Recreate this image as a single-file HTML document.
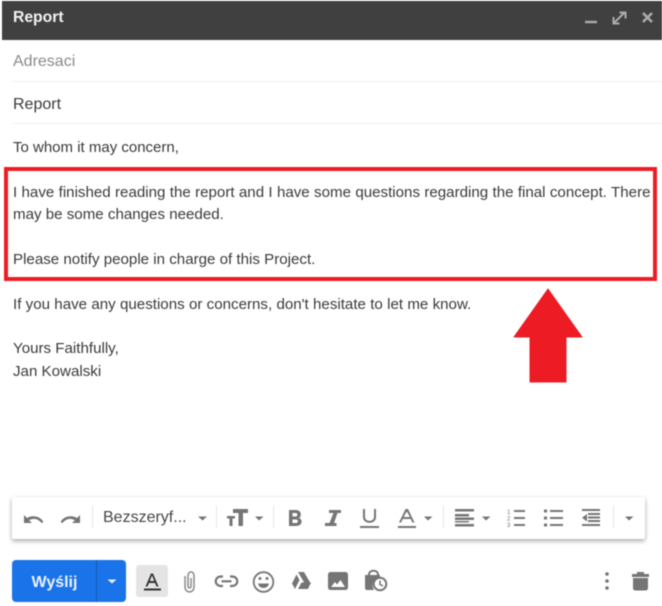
<!DOCTYPE html>
<html><head><meta charset="utf-8">
<style>
html,body{margin:0;padding:0;background:#fff}
body{width:662px;height:606px;position:relative;overflow:hidden;font-family:"Liberation Sans",sans-serif;color:#333}
#w{position:absolute;left:0;top:0;width:662px;height:606px;filter:blur(.45px)}
.t{position:absolute;white-space:nowrap;line-height:20px;font-size:15.12px;color:#3a3a3a;left:13px}
.line{position:absolute;left:13px;right:0;height:1px;background:#ececec}
svg.i{position:absolute;overflow:visible}
</style></head><body><div id="w">
<div style="position:absolute;left:2px;top:1px;width:660px;height:39px;background:#404040"></div>
<div class="t" style="top:8px;font-weight:bold;color:#f2f2f2;font-size:15.7px">Report</div>
<svg class="i" style="left:580px;top:8px" width="80" height="20" fill="none" stroke="#ababab" stroke-width="2.4">
<path d="M5 14H17"/>
<path d="M34 15L44 5M39.500 4.500H45.500V10.500M33.500 9V15.500H39.500" stroke-width="2"/>
<path d="M63 5L72 14M72 5L63 14" stroke-width="2.6"/>
</svg>
<div class="t" style="top:52px;color:#8a8a8a;font-size:16px">Adresaci</div>
<div class="line" style="top:81px"></div>
<div class="t" style="top:95px;font-size:16px">Report</div>
<div class="line" style="top:123px"></div>

<div class="t" style="top:138px;font-size:15px">To whom it may concern,</div>
<div class="t" style="top:183px;word-spacing:.13px">I have finished reading the report and I have some questions regarding the final concept. There</div>
<div class="t" style="top:205px">may be some changes needed.</div>
<div class="t" style="top:250px">Please notify people in charge of this Project.</div>
<div class="t" style="top:295px;word-spacing:.08px">If you have any questions or concerns, don't hesitate to let me know.</div>
<div class="t" style="top:339px">Yours Faithfully,</div>
<div class="t" style="top:362px">Jan Kowalski</div>

<div style="position:absolute;left:4px;top:167px;width:645px;height:106px;border:4px solid #ed1c24"></div>
<svg class="i" style="left:0;top:0" width="662" height="606"><path d="M548 289L582 337H566V382H530V337H514Z" fill="#ed1c24" stroke="#ed1c24" stroke-width="1" stroke-linejoin="round"/></svg>

<div style="position:absolute;left:12px;top:497px;width:633px;height:42px;background:#fff;border-radius:2px;box-shadow:0 2px 5px rgba(0,0,0,.35)"></div>
<div class="t" style="left:103px;top:508px;font-size:16px;color:#464646">Bezszeryf...</div>

<svg class="i" style="left:0;top:490px" width="662" height="116">
<g fill="#757575">
<path d="M24 25L24 33L32 33L29 30.300C33 27.800 38 28.300 41.500 33L43.500 32C40 25.800 32 25 27 28Z"/>
<path d="M80 25L80 33L72 33L75 30.300C71 27.800 66 28.300 62.500 33L60.500 32C64 25.800 72 25 77 28Z"/>
<path d="M198 26.500H207L202.500 30.500ZM255 26.500H263.500L259 30.500ZM424 26.500H432.500L428 30.500ZM482 26.500H490.500L486 30.500ZM625 26.500H633.500L629 30.500Z"/>
<path d="M233 19H248V23H243V36H238.500V23H233ZM227 26H235V28.500H232.500V36H229.500V28.500H227Z"/>
<path d="M289 20H296C302 20 302 27.500 298.500 28C303 28.500 303 36 296 36H289ZM292.500 23V26.500H295.500C298 26.500 298 23 295.500 23ZM292.500 29.500V33H296C298.500 33 298.500 29.500 296 29.500Z"/>
<path d="M329 20H341V23H337.500L334 33H336.500V36H325V33H329.500L333.500 23H329Z"/>
<rect x="360" y="36" width="19" height="2"/>
<rect x="398" y="36" width="18" height="2"/>
<path d="M405.500 19H408L414.500 32.500H412.300L410.800 29H402.700L401.200 32.500H399ZM403.600 27H410L406.800 21.500Z"/>
<path d="M455 19H474V21.500H455ZM455 24H469V26.500H455ZM455 27.500H474V30H455ZM455 31H469V32.500H455ZM455 34H474V36.500H455Z"/>
<path d="M514 20H525V22H514ZM514 27H525V29H514ZM514 34H525V36H514Z"/>
<path d="M544 19.500h3v3h-3zM544 26.500h3v3h-3zM544 33.500h3v3h-3zM550 20H563V22H550ZM550 27H563V29H550ZM550 34H563V36H550Z"/>
<path d="M582 19H600V21H582ZM588 23H600V25H588ZM588 26.500H600V28.500H588ZM588 30H600V32H588ZM582 34H600V36H582ZM587 24V31.500L582 27.800Z"/>
</g>
<g fill="none" stroke="#757575" stroke-width="2"><path d="M364 19V27C364 33.500 375 33.500 375 27V19"/></g>
<g fill="#757575" font-family="Liberation Sans" font-size="6"><text x="507" y="24">1</text><text x="507" y="30.500">2</text><text x="507" y="37">3</text></g>
<g fill="#e6e6e6"><rect x="92" y="16" width="1" height="22"/><rect x="216" y="16" width="1" height="22"/><rect x="273" y="16" width="1" height="22"/><rect x="443" y="16" width="1" height="22"/><rect x="613" y="16" width="1" height="22"/></g>

<rect x="12" y="70" width="114" height="42" rx="4" fill="#1a73e8"/>
<rect x="96" y="70" width="1" height="42" fill="#1358b4"/>
<text x="31.500" y="97" font-family="Liberation Sans" font-weight="bold" font-size="16" fill="#eaf2fd">Wyślij</text>
<path d="M107.500 89.500H116.500L112 93.500Z" fill="#e8f0fd"/>
<rect x="136" y="75" width="32" height="32" rx="3" fill="#e4e4e4"/>
<path d="M151 83.500H153L158.500 96.500H156.500L155 93H149L147.500 96.500H145.500ZM149.800 91H154.200L152 85.500Z" fill="#333"/>
<rect x="144" y="98.500" width="17" height="2" fill="#333"/>
<path d="M185 86V97C185 103.500 194 103.500 194 97V86C194 80.500 188 80.500 188 86V96C188 98.500 191 98.500 191 96V88" fill="none" stroke="#8a8a8a" stroke-width="1.500"/>
<path d="M223 86.500H221C214 86.500 214 96 221 96H223M230 86.500H232C239 86.500 239 96 232 96H230M221.500 91.300H231.500" fill="none" stroke="#757575" stroke-width="2.200"/>
<circle cx="263.500" cy="92" r="9.800" fill="none" stroke="#757575" stroke-width="1.800"/>
<circle cx="260" cy="88.500" r="1.500" fill="#757575"/><circle cx="267" cy="88.500" r="1.500" fill="#757575"/>
<path d="M258 93.500H269C268 99.500 259 99.500 258 93.500Z" fill="#757575"/>
<path d="M298 82H304L311 94H305ZM296.500 84.500L299.500 90L295 99L292 93.500ZM301.500 92.500H311L308 99H298Z" fill="#757575"/>
<path d="M331 82H345C347 82 348 83 348 85V97C348 99 347 100 345 100H331C329 100 328 99 328 97V85C328 83 329 82 331 82ZM331 97H345L340.500 90L337 94.500L335 92Z" fill="#757575" fill-rule="evenodd"/>
<path d="M369 85V84.500C369 79.500 378 79.500 378 84.500V85" fill="none" stroke="#757575" stroke-width="2"/>
<path d="M365 85H380V87C373 88 371 95 374 100H367C365.500 100 365 99 365 98Z" fill="#757575"/>
<circle cx="380" cy="94" r="6.300" fill="none" stroke="#757575" stroke-width="2"/>
<path d="M380 90.500V94.500L383 96" fill="none" stroke="#757575" stroke-width="1.500"/>
<circle cx="607" cy="84" r="1.800" fill="#757575"/><circle cx="607" cy="91" r="1.800" fill="#757575"/><circle cx="607" cy="98" r="1.800" fill="#757575"/>
<path d="M632 84H649V87H632ZM637 82H644V84H637ZM633 88H648V98C648 99.500 647 100.500 645.500 100.500H635.500C634 100.500 633 99.500 633 98Z" fill="#757575"/>
</svg>
</div></body></html>
